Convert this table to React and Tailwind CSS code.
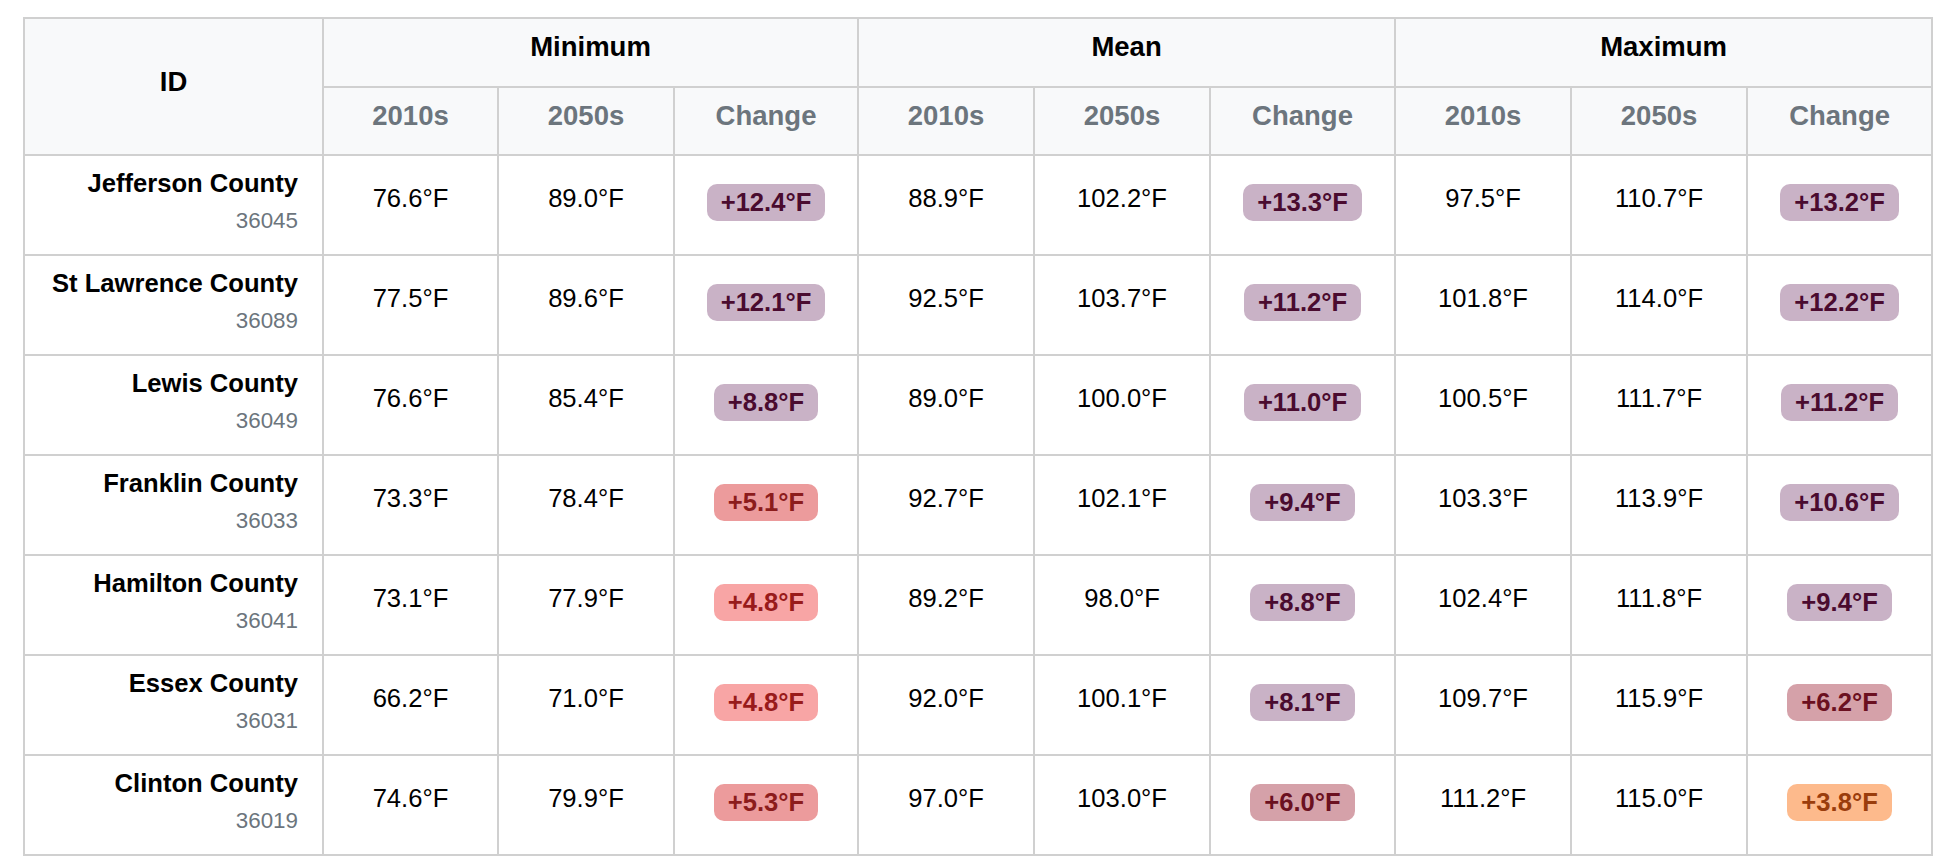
const P = "bg-[#c9b2c6] text-[#4a0b2f]";
const R1 = "bg-[#f8a5a5] text-[#991b1b]";
const R2 = "bg-[#ec9b9c] text-[#8c1c1c]";
const M = "bg-[#d5a1a9] text-[#6b1020]";
const O = "bg-[#fdba8c] text-[#9a3d0c]";

const GROUPS = ["Minimum", "Mean", "Maximum"];
const SUBS = ["2010s", "2050s", "Change"];
const COLS = [299, 175, 176, 184, 176, 176, 185, 176, 176, 185];

const ROWS = [
  {
    name: "Jefferson County",
    id: "36045",
    stats: [
      ["76.6", "89.0", "+12.4", P],
      ["88.9", "102.2", "+13.3", P],
      ["97.5", "110.7", "+13.2", P],
    ],
  },
  {
    name: "St Lawrence County",
    id: "36089",
    stats: [
      ["77.5", "89.6", "+12.1", P],
      ["92.5", "103.7", "+11.2", P],
      ["101.8", "114.0", "+12.2", P],
    ],
  },
  {
    name: "Lewis County",
    id: "36049",
    stats: [
      ["76.6", "85.4", "+8.8", P],
      ["89.0", "100.0", "+11.0", P],
      ["100.5", "111.7", "+11.2", P],
    ],
  },
  {
    name: "Franklin County",
    id: "36033",
    stats: [
      ["73.3", "78.4", "+5.1", R2],
      ["92.7", "102.1", "+9.4", P],
      ["103.3", "113.9", "+10.6", P],
    ],
  },
  {
    name: "Hamilton County",
    id: "36041",
    stats: [
      ["73.1", "77.9", "+4.8", R1],
      ["89.2", "98.0", "+8.8", P],
      ["102.4", "111.8", "+9.4", P],
    ],
  },
  {
    name: "Essex County",
    id: "36031",
    stats: [
      ["66.2", "71.0", "+4.8", R1],
      ["92.0", "100.1", "+8.1", P],
      ["109.7", "115.9", "+6.2", M],
    ],
  },
  {
    name: "Clinton County",
    id: "36019",
    stats: [
      ["74.6", "79.9", "+5.3", R2],
      ["97.0", "103.0", "+6.0", M],
      ["111.2", "115.0", "+3.8", O],
    ],
  },
];

function Badge({ value, tone }) {
  return (
    <span className={`rounded-[10px] px-[14px] text-[25.6px] font-bold leading-[37px] ${tone}`}>
      {value}°F
    </span>
  );
}

export default function App() {
  return (
    <div className="min-h-screen bg-white pl-[23px] pt-[17px] font-['Liberation_Sans',Arial,sans-serif] text-black">
      <table className="w-[1908px] table-fixed border-collapse border-2 border-[#c8c8c8]">
        <colgroup>
          {COLS.map((w, i) => (
            <col key={i} style={{ width: w }} />
          ))}
        </colgroup>
        <thead className="bg-[#f8f9fa]">
          <tr className="h-[69px]">
            <th
              rowSpan={2}
              className="border-2 border-[#d0d0d0] pb-[10px] text-center text-[27.5px] font-bold"
            >
              ID
            </th>
            {GROUPS.map((g) => (
              <th
                key={g}
                colSpan={3}
                className="border-2 border-[#d0d0d0] pb-[11px] text-center text-[27.5px] font-bold"
              >
                {g}
              </th>
            ))}
          </tr>
          <tr className="h-[68px]">
            {GROUPS.map((g) =>
              SUBS.map((s) => (
                <th
                  key={g + s}
                  className="border-2 border-[#d0d0d0] pb-[11px] text-center text-[27.5px] font-bold text-[#6c757d]"
                >
                  {s}
                </th>
              ))
            )}
          </tr>
        </thead>
        <tbody>
          {ROWS.map((row) => (
            <tr key={row.id} className="h-[100px]">
              <td className="border-2 border-[#d0d0d0] pr-[24px] pt-[8px] align-top text-right">
                <div className="text-[25.6px] font-bold leading-[38px]">{row.name}</div>
                <div className="mt-[2px] text-[22.4px] leading-[34px] text-[#6c757d]">{row.id}</div>
              </td>
              {row.stats.map(([a, b, change, tone], i) => (
                <>
                  <td
                    key={`a${i}`}
                    className="border-2 border-[#d0d0d0] pt-[23px] align-top text-center text-[25.6px] leading-[38px]"
                  >
                    {a}°F
                  </td>
                  <td
                    key={`b${i}`}
                    className="border-2 border-[#d0d0d0] pt-[23px] align-top text-center text-[25.6px] leading-[38px]"
                  >
                    {b}°F
                  </td>
                  <td key={`c${i}`} className="border-2 border-[#d0d0d0] pt-[28px] align-top">
                    <div className="flex justify-center">
                      <Badge value={change} tone={tone} />
                    </div>
                  </td>
                </>
              ))}
            </tr>
          ))}
        </tbody>
      </table>
    </div>
  );
}
